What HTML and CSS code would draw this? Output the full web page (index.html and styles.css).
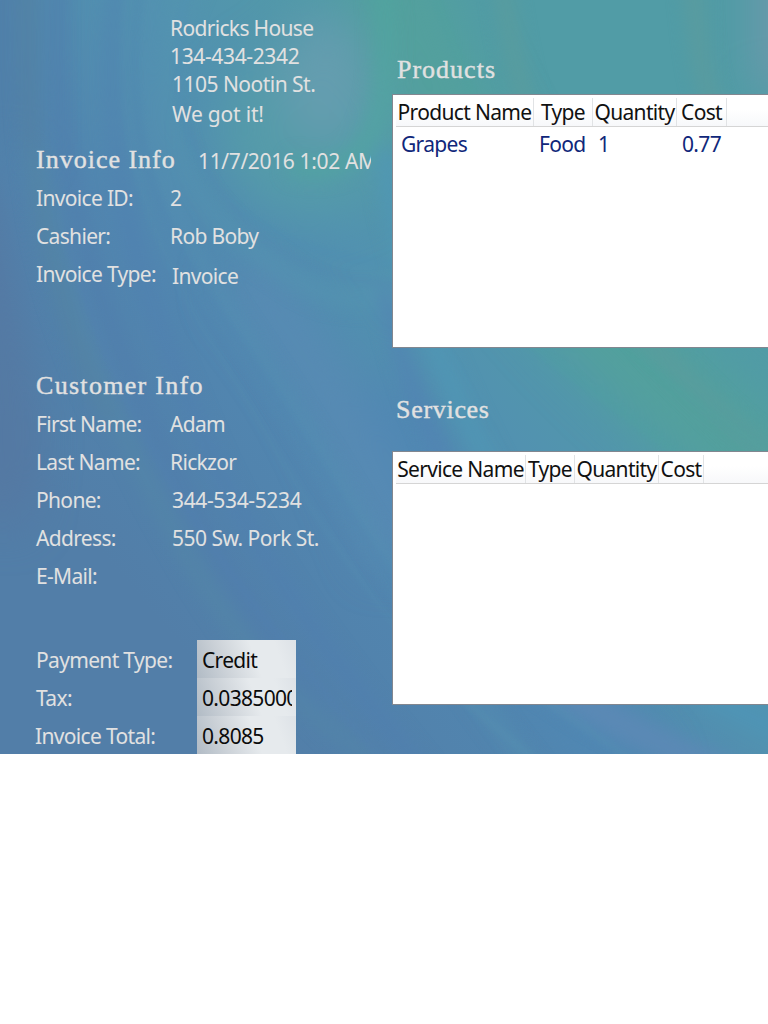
FILE: index.html
```html
<!DOCTYPE html>
<html lang="en">
<head>
<meta charset="utf-8">
<title>Invoice</title>
<link rel="stylesheet" href="styles.css">
</head>
<body>
<main class="invoice">
  <svg class="backdrop" viewBox="0 0 768 754" preserveAspectRatio="none" aria-hidden="true">
    <defs>
      <linearGradient id="base" gradientUnits="userSpaceOnUse" x1="40" y1="480" x2="540" y2="60">
        <stop offset="0" stop-color="#527ea8"/>
        <stop offset=".35" stop-color="#5186b0"/>
        <stop offset=".6" stop-color="#5292b0"/>
        <stop offset=".85" stop-color="#529ca6"/>
        <stop offset="1" stop-color="#519ca6"/>
      </linearGradient>
      <filter id="soft" filterUnits="userSpaceOnUse" x="-60" y="-60" width="900" height="900" color-interpolation-filters="sRGB"><feGaussianBlur stdDeviation="9"/></filter>
      <filter id="wide" filterUnits="userSpaceOnUse" x="-100" y="-100" width="980" height="980" color-interpolation-filters="sRGB"><feGaussianBlur stdDeviation="24"/></filter>
      <filter id="fine" filterUnits="userSpaceOnUse" x="-60" y="-60" width="900" height="900" color-interpolation-filters="sRGB"><feGaussianBlur stdDeviation="3"/></filter>
    </defs>
    <rect width="768" height="754" fill="url(#base)"/>
    <g filter="url(#wide)" fill="none">
      <path d="M-20 -60V160" stroke="#507fa8" stroke-width="90"/>
      <path d="M-30 180C0 330 20 420 0 520" stroke="#5676a0" stroke-width="40"/>
      <path d="M390 -60C440 160 560 330 850 530" stroke="#53a09d" stroke-width="90"/>
      <path d="M375 390C440 520 530 660 640 790" stroke="#5087b3" stroke-width="60"/>
      <ellipse cx="310" cy="130" rx="90" ry="85" fill="#559ba9"/>
      <ellipse cx="325" cy="80" rx="45" ry="65" fill="#659daf"/>
      <path d="M790 -60V90" stroke="#7198ac" stroke-width="60"/>
      <path d="M240 270C300 340 340 400 400 560" stroke="#598bb4" stroke-width="45"/>
    </g>
    <g filter="url(#soft)" fill="none">
      <path d="M30 -40C20 180 50 300 110 420" stroke="#54809f" stroke-width="14" opacity=".7"/>
      <path d="M60 -40C50 160 80 260 150 420S300 680 370 780" stroke="#507cac" stroke-width="14" opacity=".7"/>
      <path d="M35 150C60 300 110 420 190 560S330 710 380 780" stroke="#5488a6" stroke-width="13" opacity=".7"/>
      <path d="M120 -40C90 170 150 310 200 430S330 660 430 780" stroke="#507db2" stroke-width="14" opacity=".5"/>
      <path d="M155 -40C130 100 150 200 240 330S430 650 540 780" stroke="#5591b2" stroke-width="14" opacity=".6"/>
      <path d="M205 -40C145 60 160 180 240 240S330 310 430 290" stroke="#5595b0" stroke-width="16" opacity=".6"/>
      <path d="M378 -60C395 80 390 190 290 165" stroke="#50a69f" stroke-width="20" opacity=".65"/>
      <path d="M385 150C395 230 420 350 530 540" stroke="#5097b5" stroke-width="20" opacity=".8"/>
      <path d="M385 290C405 390 450 500 570 660" stroke="#5280b4" stroke-width="11" opacity=".8"/>
      <path d="M500 -40C520 160 590 320 800 480" stroke="#5a9c9d" stroke-width="15"/>
      <path d="M690 -40C700 50 700 80 720 120" stroke="#5b9b9e" stroke-width="16"/>
      <path d="M430 570C550 700 610 720 760 790" stroke="#5b89b5" stroke-width="30"/>
      <path d="M700 690L850 765" stroke="#4f94b5" stroke-width="26"/>
    </g>
    <g filter="url(#fine)" fill="none" opacity=".22">
      <path d="M128 -20C110 130 145 230 205 330S310 520 400 630" stroke="#5a99b4" stroke-width="4"/>
      <path d="M142 -20C120 130 155 220 225 320S350 520 420 620" stroke="#4d79ae" stroke-width="4"/>
      <path d="M190 -20C145 150 225 250 400 265" stroke="#4d8bb6" stroke-width="5"/>
      <path d="M190 130C230 240 310 280 400 285" stroke="#5383b2" stroke-width="5"/>
      <path d="M65 230C130 480 280 640 400 780" stroke="#5480b5" stroke-width="6"/>
      <path d="M430 -20C460 60 470 80 475 110" stroke="#4da39c" stroke-width="6"/>
      <path d="M500 320L700 470M580 320L780 460" stroke="#4ba3a0" stroke-width="8"/>
      <path d="M450 690L560 780M530 690L660 780" stroke="#5c9ab3" stroke-width="6"/>
    </g>
  </svg>

  <section class="details">
    <address class="company">
      <span>Rodricks House</span>
      <span class="number">134-434-2342</span>
      <span class="nudge street">1105 Nootin St.</span>
      <span class="nudge motto">We got it!</span>
    </address>

    <header class="heading">
      <h2 class="title">Invoice Info</h2>
      <time class="stamp number">11/7/2016 1:02 AM</time>
    </header>
    <dl class="fields">
      <dt>Invoice ID:</dt><dd>2</dd>
      <dt>Cashier:</dt><dd>Rob Boby</dd>
      <dt>Invoice Type:</dt><dd class="nudge low">Invoice</dd>
    </dl>

    <header class="heading customer">
      <h2 class="title">Customer Info</h2>
    </header>
    <dl class="fields">
      <dt>First Name:</dt><dd>Adam</dd>
      <dt>Last Name:</dt><dd>Rickzor</dd>
      <dt>Phone:</dt><dd class="nudge number">344-534-5234</dd>
      <dt>Address:</dt><dd class="nudge street">550 Sw. Pork St.</dd>
      <dt>E-Mail:</dt><dd></dd>
    </dl>

    <dl class="fields totals">
      <dt>Payment Type:</dt><dd class="box"><span>Credit</span></dd>
      <dt>Tax:</dt><dd class="box"><span>0.0385000</span></dd>
      <dt class="total">Invoice Total:</dt><dd class="box"><span>0.8085</span></dd>
    </dl>
  </section>

  <section class="lists">
    <h2 class="title products">Products</h2>
    <div class="list product-list">
      <div class="row head"><span>Product Name</span><span>Type</span><span>Quantity</span><span>Cost</span></div>
      <div class="row item"><span>Grapes</span><span>Food</span><span>1</span><span>0.77</span></div>
    </div>
    <h2 class="title services">Services</h2>
    <div class="list service-list">
      <div class="row head"><span>Service Name</span><span>Type</span><span>Quantity</span><span>Cost</span></div>
    </div>
  </section>
</main>
</body>
</html>
```
FILE: styles.css
```css
* { box-sizing: border-box; }

body {
  margin: 0;
  background: #fff;
  font-family: "Noto Sans", "Open Sans", sans-serif;
  font-size: 21px;
  letter-spacing: -.67px;
  line-height: 28px;
  overflow: hidden;
}

.invoice {
  position: relative;
  isolation: isolate;
  display: grid;
  grid-template-columns: 392px 1fr;
  height: 754px;
  overflow: hidden;
  color: #e1e1e1;
  white-space: nowrap;
}

.backdrop {
  position: absolute;
  inset: 0;
  z-index: -1;
  width: 100%;
  height: 100%;
}

.details {
  padding: 14px 0 0 36px;
}

.number { letter-spacing: -.36px; }
.street { letter-spacing: -.52px; }

.company {
  display: flex;
  flex-direction: column;
  padding-left: 134px;
  font-style: normal;
}

.motto {
  padding-top: 2px;
  letter-spacing: -.2px;
}
.company .nudge,
.fields .nudge { padding-left: 2px; }

.heading {
  display: flex;
  height: 37px;
  margin-top: 14px;
  padding-top: 4px;
}

.heading.customer { margin-top: 75px; }

.title {
  margin: 0;
  font-family: "Liberation Serif", serif;
  font-size: 26px;
  font-weight: 400;
  letter-spacing: 1px;
  line-height: 28px;
  -webkit-text-stroke: .4px;
}

.heading .title { width: 140px; }
.customer .title { letter-spacing: 1.3px; }

.stamp {
  width: 173px;
  margin-left: 22px;
  padding-top: 1px;
  overflow: hidden;
}

.fields {
  display: grid;
  grid-template-columns: 134px 1fr;
  grid-auto-rows: 38px;
  align-items: center;
  margin: 0;
}

.fields dd { margin: 0; }
.fields .low { padding-top: 3px; }

.totals {
  grid-template-columns: 161px 99px;
  margin-top: 45px;
}

.totals dt { padding-top: 2px; }
.totals .total { margin-left: -1px; }

.box {
  height: 38px;
  padding: 6px 4px 0 5px;
  color: #0b0b0b;
  background: linear-gradient(70deg, #b1bbc5 0%, #ccd2d8 28%, #e6eaed 58%, #e6eaed 80%, #dde2e7 100%);
}

.box span {
  display: block;
  overflow: hidden;
}

.lists {
  display: flex;
  flex-direction: column;
}

.products { margin: 56px 0 10px 5px; }
.services { margin: 48px 0 27px 4px; letter-spacing: .7px; }

.list {
  height: 254px;
  padding: 3px 0 0 3px;
  border: solid #828790;
  border-width: 1px 0 1px 1px;
  background: #fff;
}

.row { display: grid; }
.product-list .row { grid-template-columns: 138px 59px 84px 50px; }
.service-list .row { grid-template-columns: 130px 49px 84px 45px; }

.head {
  height: 29px;
  color: #111;
  background: linear-gradient(#fff 40%, #f7f8fa);
  border-bottom: 1px solid #d5d5d5;
}

.head span {
  border-right: 1px solid #e1e3e5;
  text-align: center;
}

.item {
  padding-top: 3px;
  color: #10277a;
}

.item span { padding-left: 5px; }
```
